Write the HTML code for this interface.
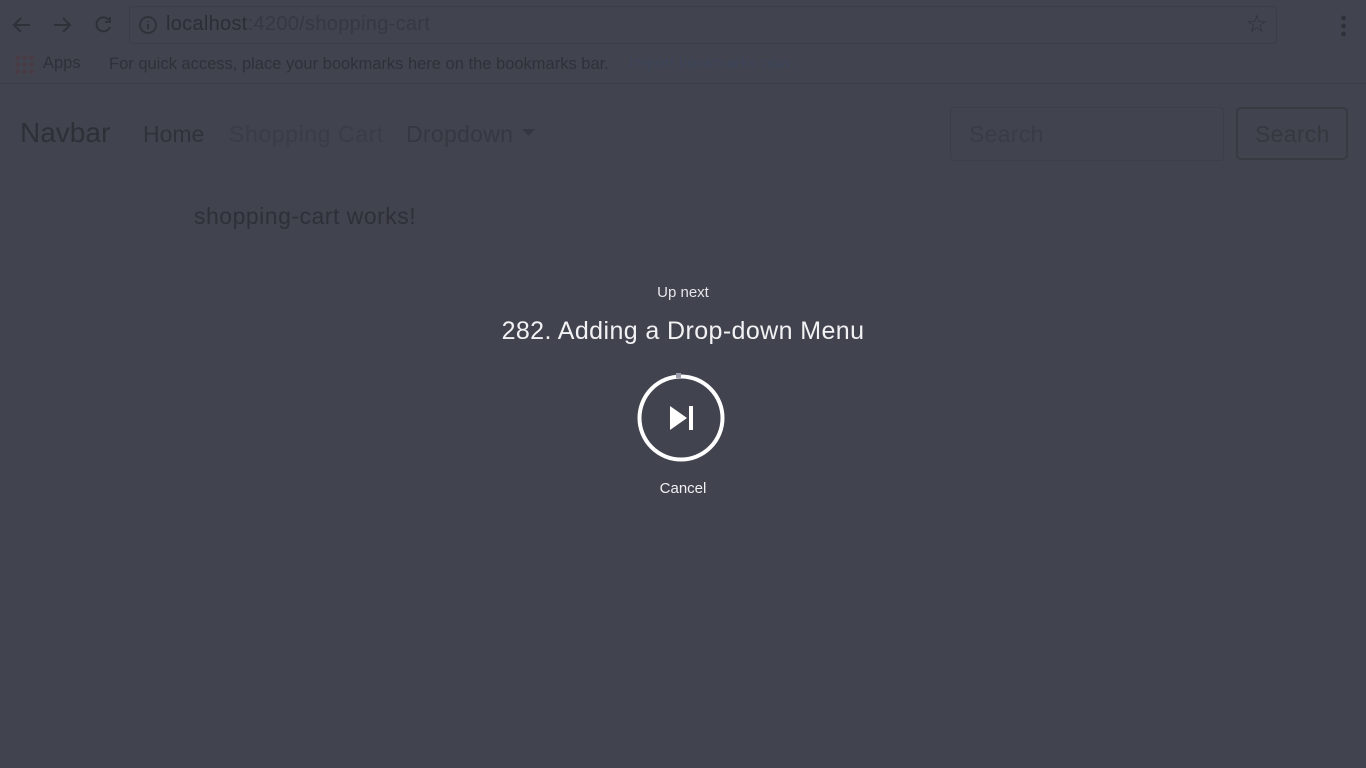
<!DOCTYPE html>
<html><head><meta charset="utf-8"><style>
body{margin:0;width:1366px;height:768px;background:#41434f;font-family:"Liberation Sans",sans-serif;position:relative;overflow:hidden}
.a{position:absolute;white-space:nowrap}
</style></head><body>
<svg class="a" style="left:10px;top:12px" width="110" height="26" viewBox="0 0 110 26" fill="none" stroke="#2f3139" stroke-width="2">
<path d="M20 13H4M11 6L4 13L11 20"/><path d="M44 13H60M53 6L60 13L53 20"/>
<path d="M99 8A7 7 0 1 0 100 15"/><path d="M100 5V10H95"/></svg>
<div class="a" style="left:129px;top:6px;width:1146px;height:36px;border:1px solid #3b3d48;border-radius:4px"></div>
<svg class="a" style="left:138px;top:15px" width="20" height="20"><circle cx="10" cy="10" r="8" fill="none" stroke="#2f3139" stroke-width="1.8"/><path d="M10 9v5M10 6v1" stroke="#2f3139" stroke-width="2"/></svg>
<div class="a" style="left:166px;top:13px;font-size:20px;letter-spacing:0.3px;color:#2c2e36">localhost<span style="color:#363843">:4200/shopping-cart</span></div>
<div class="a" style="left:1246px;top:10px;font-size:24px;color:#2f3139">☆</div>
<div class="a" style="left:1341px;top:14px;width:5px;height:24px;background:radial-gradient(circle,#2f3139 2.2px,transparent 2.5px) 0 0/5px 8px"></div>
<div class="a" style="left:14px;top:54px;width:20px;height:20px;background:radial-gradient(circle,#4a3a44 2px,transparent 2.5px) 0 0/7px 7px"></div>
<div class="a" style="left:43px;top:54px;font-size:16.5px;color:#2f3139">Apps</div>
<div class="a" style="left:109px;top:55px;font-size:16.5px;color:#2f3139">For quick access, place your bookmarks here on the bookmarks bar.</div>
<div class="a" style="left:629px;top:55px;font-size:16px;color:#3e4459">Import bookmarks now...</div>
<div class="a" style="left:0;top:83px;width:1366px;height:1px;background:#3a3c46"></div>
<div class="a" style="left:20px;top:117px;font-size:28px;color:#2e3038">Navbar</div>
<div class="a" style="left:143px;top:121px;font-size:23px;color:#30323a">Home</div>
<div class="a" style="left:229px;top:121px;font-size:23px;letter-spacing:0.6px;color:#3a3c47">Shopping Cart</div>
<div class="a" style="left:406px;top:121px;font-size:23px;letter-spacing:0.3px;color:#353741">Dropdown</div>
<svg class="a" style="left:522px;top:129px" width="14" height="8"><path d="M0 0H13L6.5 7Z" fill="#353741"/></svg>
<div class="a" style="left:950px;top:107px;width:272px;height:52px;border:1px solid #3c3e49;border-radius:4px"></div>
<div class="a" style="left:969px;top:121px;font-size:23px;letter-spacing:0.3px;color:#393b46">Search</div>
<div class="a" style="left:1236px;top:107px;width:112px;height:53px;border:2px solid #363b42;border-radius:5px;box-sizing:border-box"></div>
<div class="a" style="left:1255px;top:121px;font-size:23px;letter-spacing:0.3px;color:#34393f">Search</div>
<div class="a" style="left:194px;top:203px;font-size:23px;letter-spacing:0.5px;color:#2e3038">shopping-cart works!</div>
<div class="a" style="left:0;width:1366px;top:284px;text-align:center;font-size:15px;color:#e6e6e8">Up next</div>
<div class="a" style="left:0;width:1366px;top:317px;text-align:center;font-size:25px;letter-spacing:0.4px;color:#f2f2f4">282. Adding a Drop-down Menu</div>
<svg class="a" style="left:636px;top:373px" width="90" height="90"><circle cx="45" cy="45" r="41.5" fill="none" stroke="#fff" stroke-width="4"/><path d="M40 2.5 A42.5 42.5 0 0 1 45 2.5" stroke="#9a9cac" stroke-width="5"/><path d="M34 33L51 45L34 57Z" fill="#fff"/><rect x="53" y="33" width="4" height="24" fill="#fff"/></svg>
<div class="a" style="left:0;width:1366px;top:480px;text-align:center;font-size:15px;color:#f0f0f2">Cancel</div>
</body></html>
